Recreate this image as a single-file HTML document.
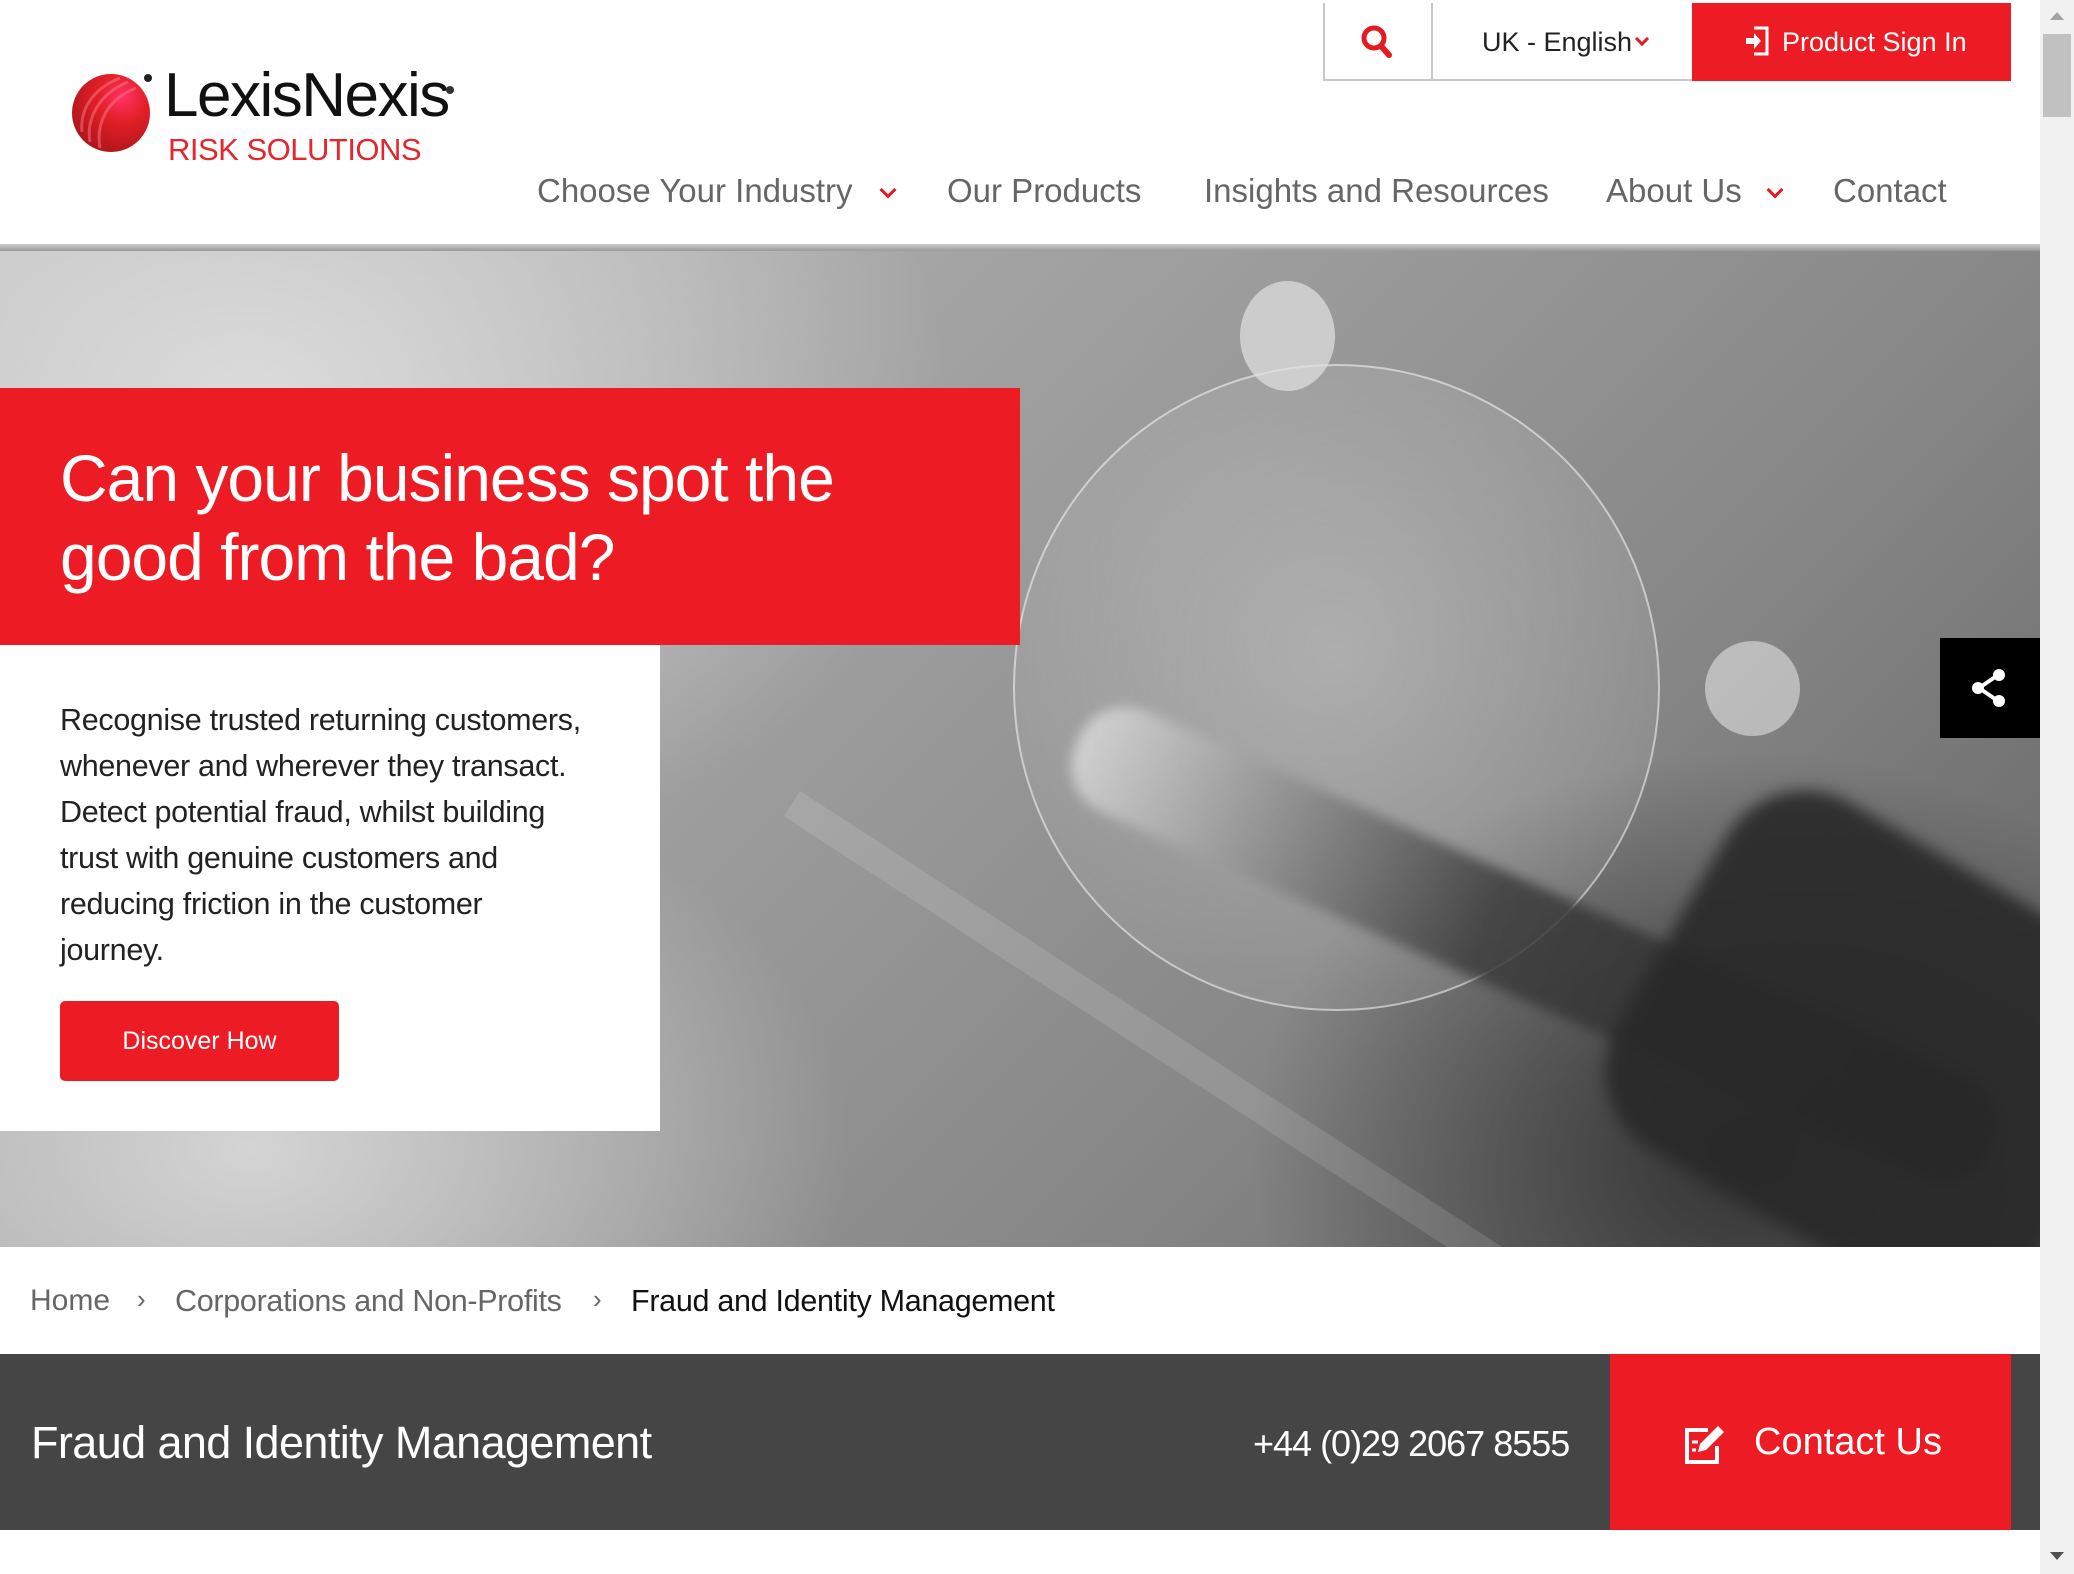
<!DOCTYPE html>
<html><head><meta charset="utf-8"><style>
*{margin:0;padding:0;box-sizing:border-box}
body{width:2074px;height:1574px;overflow:hidden;background:#fff;font-family:"Liberation Sans",sans-serif;position:relative}
.a{position:absolute;white-space:nowrap}
.nav{font-size:33px;color:#666;top:172px}
.chev{position:absolute;width:12px;height:12px;border-right:3px solid #e31b23;border-bottom:3px solid #e31b23;transform:rotate(45deg)}
</style></head><body>
<!-- top utility -->
<div class="a" style="left:1323px;top:3px;width:369px;height:78px;border-left:2px solid #c8c8c8;border-bottom:2px solid #c8c8c8"></div>
<div class="a" style="left:1431px;top:3px;width:2px;height:76px;background:#c8c8c8"></div>
<svg class="a" style="left:1360px;top:24px" width="34" height="36" viewBox="0 0 34 36"><circle cx="14" cy="14" r="10" fill="none" stroke="#e31b23" stroke-width="5"/><line x1="21" y1="22" x2="29" y2="31" stroke="#e31b23" stroke-width="6" stroke-linecap="round"/></svg>
<div class="a" style="left:1482px;top:27px;font-size:27px;color:#222">UK - English</div>
<div class="chev" style="left:1637px;top:34px;width:10px;height:10px"></div>
<div class="a" style="left:1692px;top:3px;width:319px;height:78px;background:#ed1c24"></div>
<svg class="a" style="left:1744px;top:25px" width="26" height="32" viewBox="0 0 26 32"><path d="M10 3H23V29H10" fill="none" stroke="#fff" stroke-width="3"/><path d="M2 13H10V8L17 16L10 24V19H2Z" fill="#fff"/></svg>
<div class="a" style="left:1782px;top:27px;font-size:27px;color:#fff">Product Sign In</div>
<!-- logo -->
<svg class="a" style="left:70px;top:72px" width="82" height="82" viewBox="0 0 82 82"><defs><radialGradient id="g" cx="0.65" cy="0.3" r="0.8"><stop offset="0" stop-color="#f36"/><stop offset="0.4" stop-color="#e21f26"/><stop offset="1" stop-color="#a8141a"/></radialGradient></defs><circle cx="41" cy="41" r="39" fill="url(#g)"/><path d="M12 60C10 40 20 18 50 6M20 70C16 48 28 22 58 10M30 76C26 52 36 28 66 16" stroke="#f78" stroke-width="3" fill="none" opacity=".5"/></svg>
<div class="a" style="left:144px;top:74px;width:8px;height:8px;border-radius:50%;background:#222"></div>
<div class="a" style="left:164px;top:60px;font-size:62px;color:#111;letter-spacing:-1.5px">LexisNexis</div>
<div class="a" style="left:446px;top:86px;width:8px;height:8px;border-radius:50%;background:#333"></div>
<div class="a" style="left:168px;top:132px;font-size:31px;color:#e4262d;letter-spacing:-0.5px">RISK SOLUTIONS</div>
<!-- nav -->
<div class="a nav" style="left:537px">Choose Your Industry</div>
<div class="chev" style="left:882px;top:184px"></div>
<div class="a nav" style="left:947px">Our Products</div>
<div class="a nav" style="left:1204px">Insights and Resources</div>
<div class="a nav" style="left:1606px">About Us</div>
<div class="chev" style="left:1769px;top:184px"></div>
<div class="a nav" style="left:1833px">Contact</div>
<div class="a" style="left:0;top:244px;width:2040px;height:7px;background:linear-gradient(#ccc,#999)"></div>
<!-- hero -->
<div class="a" style="left:0;top:251px;width:2040px;height:996px;overflow:hidden;background:
radial-gradient(ellipse 500px 400px at 1750px 900px,#333,rgba(50,50,50,0) 100%),
radial-gradient(ellipse 700px 500px at 250px 150px,#dcdcdc,rgba(220,220,220,0) 100%),
radial-gradient(ellipse 600px 400px at 250px 900px,#d4d4d4,rgba(200,200,200,0) 100%),
linear-gradient(135deg,#bdbdbd 0%,#9a9a9a 45%,#858585 70%,#606060 100%)">
 <div class="a" style="left:1013px;top:113px;width:647px;height:647px;border-radius:50%;border:2px solid rgba(255,255,255,.5);background:radial-gradient(circle at 50% 45%,rgba(220,220,220,.4),rgba(180,180,180,.2) 70%,rgba(200,200,200,.1))"></div>
 <div class="a" style="left:1240px;top:30px;width:95px;height:110px;border-radius:50%;background:rgba(225,225,225,.7)"></div>
 <div class="a" style="left:1705px;top:390px;width:95px;height:95px;border-radius:50%;background:rgba(225,225,225,.6)"></div>
 <div class="a" style="left:1100px;top:440px;width:1000px;height:110px;background:linear-gradient(90deg,rgba(230,230,230,.7),rgba(60,60,60,.85) 45%,rgba(35,35,35,.9));transform:rotate(24deg);transform-origin:0 0;border-radius:50px;filter:blur(6px)"></div>
 <div class="a" style="left:1640px;top:600px;width:480px;height:400px;background:rgba(40,40,40,.9);transform:rotate(30deg);border-radius:90px;filter:blur(8px)"></div>
 <div class="a" style="left:800px;top:540px;width:900px;height:30px;background:rgba(255,255,255,.12);transform:rotate(33deg);transform-origin:0 0"></div>
</div>
<!-- red headline -->
<div class="a" style="left:0;top:388px;width:1020px;height:257px;background:#ed1c24"></div>
<div class="a" style="left:60px;top:439px;font-size:66px;line-height:79px;color:#fff;letter-spacing:-1px">Can your business spot the<br>good from the bad?</div>
<!-- white panel -->
<div class="a" style="left:0;top:645px;width:660px;height:486px;background:#fff"></div>
<div class="a" style="left:60px;top:697px;font-size:30.5px;line-height:46px;color:#222;letter-spacing:-0.3px">Recognise trusted returning customers,<br>whenever and wherever they transact.<br>Detect potential fraud, whilst building<br>trust with genuine customers and<br>reducing friction in the customer<br>journey.</div>
<div class="a" style="left:60px;top:1001px;width:279px;height:80px;background:#ed1c24;border-radius:5px;color:#fff;font-size:25px;line-height:80px;text-align:center">Discover How</div>
<!-- share -->
<div class="a" style="left:1940px;top:638px;width:100px;height:100px;background:#000"></div>
<svg class="a" style="left:1968px;top:666px" width="44" height="44" viewBox="0 0 44 44"><line x1="30" y1="9" x2="11" y2="22" stroke="#fff" stroke-width="4"/><line x1="30" y1="35" x2="11" y2="22" stroke="#fff" stroke-width="4"/><circle cx="31" cy="9" r="6" fill="#fff"/><circle cx="31" cy="35" r="6" fill="#fff"/><circle cx="10" cy="22" r="6" fill="#fff"/></svg>
<!-- breadcrumb -->
<div class="a" style="left:30px;top:1284px;font-size:30px;color:#666">Home</div>
<div class="a" style="left:137px;top:1284px;font-size:26px;color:#666">›</div>
<div class="a" style="left:175px;top:1284px;font-size:30.5px;color:#666;letter-spacing:-0.3px">Corporations and Non-Profits</div>
<div class="a" style="left:593px;top:1284px;font-size:26px;color:#666">›</div>
<div class="a" style="left:631px;top:1284px;font-size:30.5px;color:#111;letter-spacing:-0.3px">Fraud and Identity Management</div>
<!-- dark bar -->
<div class="a" style="left:0;top:1354px;width:2040px;height:176px;background:#454545"></div>
<div class="a" style="left:31px;top:1417px;font-size:45px;color:#fff;letter-spacing:-0.6px">Fraud and Identity Management</div>
<div class="a" style="left:1253px;top:1423px;font-size:36px;color:#fff;letter-spacing:-1px">+44 (0)29 2067 8555</div>
<div class="a" style="left:1610px;top:1354px;width:401px;height:176px;background:#ed1c24"></div>
<svg class="a" style="left:1684px;top:1422px" width="44" height="44" viewBox="0 0 44 44"><path d="M24 8H3V40H33V24" fill="none" stroke="#fff" stroke-width="4"/><path d="M14 30L16 22L34 4L40 10L22 28Z" fill="#fff"/><path d="M8 20H14M8 28H12" stroke="#fff" stroke-width="3"/></svg>
<div class="a" style="left:1754px;top:1421px;font-size:38px;color:#fff">Contact Us</div>
<!-- scrollbar -->
<div class="a" style="left:2040px;top:0;width:34px;height:1574px;background:#f1f1f1"></div>
<div class="a" style="left:2043px;top:34px;width:28px;height:83px;background:#c1c1c1"></div>
<div class="a" style="left:2050px;top:12px;border-left:7px solid transparent;border-right:7px solid transparent;border-bottom:8px solid #a3a3a3"></div>
<div class="a" style="left:2050px;top:1552px;border-left:7px solid transparent;border-right:7px solid transparent;border-top:8px solid #505050"></div>
</body></html>
